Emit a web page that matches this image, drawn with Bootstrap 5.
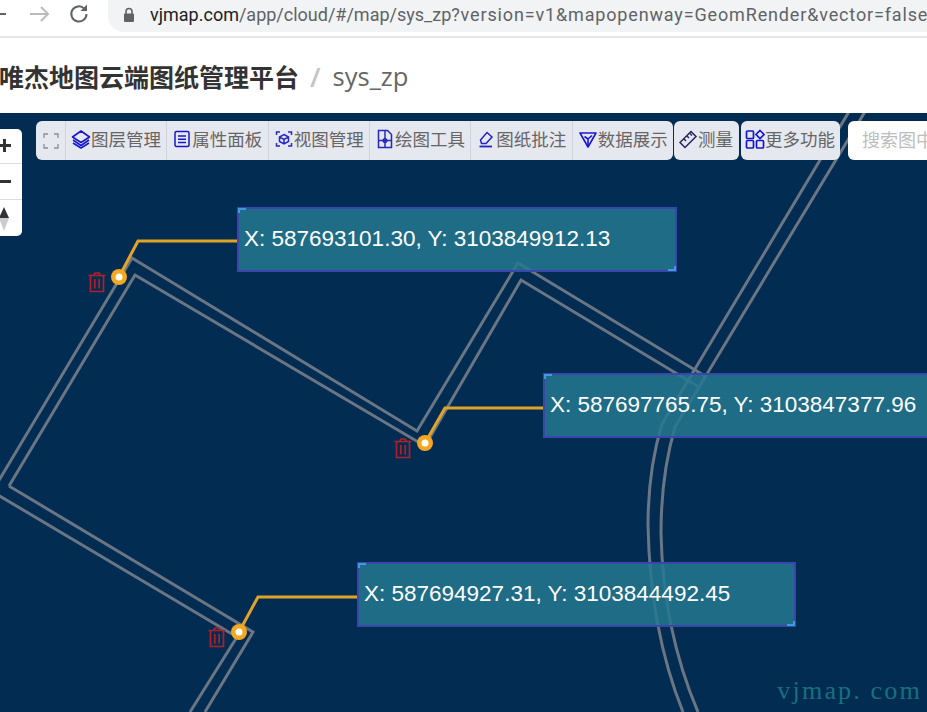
<!DOCTYPE html>
<html lang="zh-CN">
<head>
<meta charset="utf-8">
<title>唯杰地图云端图纸管理平台</title>
<link rel="stylesheet" href="https://cdn.jsdelivr.net/npm/bootstrap@5.3.0/dist/css/bootstrap.min.css">
<style>
html,body{height:712px;overflow:hidden;background:#fff}
body{font-family:"Noto Sans CJK SC","Noto Sans",sans-serif;width:927px}
.chrome-bar{height:38px;border-bottom:2px solid #e4e5e7;background:#fff}
.nav-glyph{flex:none}
.omni{height:32px;margin-left:18px;flex:1 1 0;min-width:0;background:#f1f3f4;border-radius:0 0 0 16px;padding-left:15px;padding-bottom:3px;overflow:hidden;white-space:nowrap;font-family:"Roboto","Noto Sans",sans-serif;font-size:18px;line-height:28px;color:#5f6368}
.omni b{font-weight:400;color:#202124}
.omni i{font-style:normal;letter-spacing:.85px}
.omni svg{flex:none;margin-right:15px}
.site-head{height:75px;background:#fff;white-space:nowrap;margin-left:-1px;padding-top:2px;font-size:25px;line-height:1}
.site-name{font-weight:700;color:#333}
.site-sep{color:#c4c4c4;font-weight:600;font-size:27px;margin:0 12px 0 11px;font-family:"Open Sans",sans-serif}
.site-map{color:#666;font-size:25.5px;font-family:"Open Sans",sans-serif}
.map-view{height:599px;background:#032c52;overflow:hidden}
.map-art{position:absolute;left:0;top:0}
.map-tools{position:absolute;left:36px;top:8px;height:39px;white-space:nowrap}
.tool-group{background:#e6e8ef;border-radius:6px;height:39px}
.tool-item{display:flex;align-items:center;width:101.340px;height:39px;padding:0 0 3px 5px;border:0;border-left:1px solid #d0d3dd;background:transparent;border-radius:0;color:#666;font-size:17.500px;line-height:1}
.tool-item:first-child{border-left:0;width:29px;padding:0 0 0 7px;border-radius:6px 0 0 6px}
.tool-item+.tool-item{flex:none}
.tool-item svg{flex:none}
.tool-solo{border-left:0;padding-left:4px;background:#e6e8ef;border-radius:6px}
.tool-solo.measure{width:65px;margin-left:1px}
.tool-solo.more{width:99px;margin-left:2px}
.map-search{width:120px;height:39px;margin-left:8px;background:#fff;border-radius:6px;color:#bdbdbd;font-size:18px;line-height:37px;padding-left:14px}
.zoom-box{position:absolute;left:0;top:16px;width:22px;height:107px;background:#fff;border-radius:0 5px 5px 0}
.zoom-cell{height:36px;border-bottom:1px solid #ddd}
.zoom-cell:first-child{height:35px}
.zoom-cell:last-child{border-bottom:0}
.tag{position:absolute;height:65px;background:rgba(36,120,144,.85);border:2px solid #3c45ab;color:#fff;font-family:"Liberation Sans",Arial,sans-serif;font-size:22.500px;line-height:60px;padding-left:5px;white-space:nowrap}
.tag::before,.tag::after{content:"";position:absolute;width:8px;height:5px}
.tag::before{left:-1px;top:-1px;border-left:2px solid #3e9be0;border-top:2px solid #3e9be0}
.tag::after{right:-1px;bottom:-1px;border-right:2px solid #3e9be0;border-bottom:2px solid #3e9be0}
.tag-a{left:237px;top:94px;width:440px}
.tag-b{left:543px;top:260px;width:440px}
.tag-c{left:357px;top:449px;width:439px}
.water{position:absolute;right:5px;bottom:8px;font-family:"Liberation Serif",serif;font-size:26.200px;line-height:1;letter-spacing:2.100px;color:#17707f}
</style>
</head>
<body>
<div class="chrome-bar d-flex align-items-start">
  <svg class="nav-glyph" width="20" height="28" viewBox="0 0 20 28"><path d="M-6 14H6" stroke="#5f6368" stroke-width="2" fill="none"/></svg>
  <svg class="nav-glyph ms-2" width="24" height="28" viewBox="0 0 24 28"><path d="M2 14H20M13 7l7 7-7 7" stroke="#b9bbbe" stroke-width="2" fill="none"/></svg>
  <svg class="nav-glyph ms-3" width="22" height="28" viewBox="0 0 22 28"><path d="M18.500 14a7.600 7.600 0 1 1-2.200-5.400" stroke="#5f6368" stroke-width="2" fill="none"/><path d="M19 4.500V11h-6.500z" fill="#5f6368"/></svg>
  <div class="omni d-flex align-items-center">
    <svg width="12" height="16" viewBox="0 0 12 16"><path d="M3 7V4.500a3 3 0 0 1 6 0V7" stroke="#5f6368" stroke-width="1.600" fill="none"/><rect x="1" y="6.500" width="10" height="8.500" rx="1" fill="#5f6368"/></svg>
    <span><b>vjmap.com</b>/app/cloud/#/map/sys_zp<i>?version=v1&amp;mapopenway=GeomRender&amp;vector=false</i></span>
  </div>
</div>
<div class="site-head d-flex align-items-center">
  <span class="site-name">唯杰地图云端图纸管理平台</span><span class="site-sep">/</span><span class="site-map">sys_zp</span>
</div>
<div class="map-view position-relative">
  <svg class="map-art" width="927" height="599" viewBox="0 113 927 599">
    <defs>
      <g id="bin" fill="none" stroke="#b0202a" stroke-width="1.700">
        <path d="M-8.500-6.500H8.500M-3.500-6.500L-2-9H2L3.500-6.500"/>
        <path d="M-6.500-6V9.500H6.500V-6"/>
        <path d="M-2.200-3V6.500M2.200-3V6.500"/>
      </g>
      <g id="pin">
        <circle r="8" fill="#f4a820"/><circle r="3.500" fill="#fff"/>
      </g>
    </defs>
    <g fill="none" stroke="#6a7684" stroke-width="3">
      <path d="M-2 482L132 258L417 431L518 263L705 376"/>
      <path d="M9 486L135 275L425 446L521 280L699 387"/>
      <path d="M-2 495L232 634M9 486L253 632L205 712M237 637L190 712"/>
      <path d="M850 110L662 424Q648 470 648 525Q650 630 683 712"/>
      <path d="M866 110L675 427Q661 475 661 533Q663 630 698 712"/>
    </g>
    <g fill="none" stroke="#e0a526" stroke-width="3">
      <path d="M119 277L138 241H238"/>
      <path d="M425 443L445 408H544"/>
      <path d="M239 632L258 597H358"/>
    </g>
    <use href="#bin" x="97" y="282"/><use href="#bin" x="403" y="448"/><use href="#bin" x="217" y="637"/>
    <use href="#pin" x="119" y="277"/><use href="#pin" x="425" y="443"/><use href="#pin" x="239" y="632"/>
  </svg>

  <div class="tag tag-a">X: 587693101.30, Y: 3103849912.13</div>
  <div class="tag tag-b">X: 587697765.75, Y: 3103847377.96</div>
  <div class="tag tag-c">X: 587694927.31, Y: 3103844492.45</div>
  <div class="water">vjmap. com</div>

  <div class="zoom-box">
    <div class="zoom-cell"><svg class="d-block" width="22" height="34" viewBox="0 0 22 34"><path d="M-2 16.500H11M4.500 10V23" stroke="#333" stroke-width="3" fill="none"/></svg></div>
    <div class="zoom-cell"><svg class="d-block" width="22" height="35" viewBox="0 0 22 35"><path d="M-2 17.500H11" stroke="#333" stroke-width="3" fill="none"/></svg></div>
    <div class="zoom-cell"><svg class="d-block" width="22" height="36" viewBox="0 0 22 36"><path d="M4 7L9 18H-1z" fill="#333"/><path d="M4 31L9 18H-1z" fill="#c9ccd0"/></svg></div>
  </div>

  <div class="map-tools d-flex">
    <div class="tool-group d-flex">
      <button class="btn tool-item" type="button" aria-label="全屏"><svg width="16" height="16" viewBox="0 0 16 16" fill="none" stroke="#8b8e94" stroke-width="1.300"><path d="M1 5V1H5M11 1H15V5M15 11V15H11M5 15H1V11"/></svg></button>
      <button class="btn tool-item" type="button"><svg width="20" height="20" viewBox="0 0 20 20" fill="none" stroke="#1717d0" stroke-width="1.600" stroke-linejoin="round"><path d="M10 2L18.500 8 10 13.500 1.500 8z"/><path d="M2 11L10 16.500 18 11"/><path d="M2 14L10 19 18 14"/></svg>图层管理</button>
      <button class="btn tool-item" type="button"><svg width="20" height="20" viewBox="0 0 20 20" fill="none" stroke="#1717c8" stroke-width="1.500"><rect x="3" y="2.500" width="14" height="15" rx="1.500"/><path d="M6 7H14M6 10.300H14M6 13.600H14"/></svg>属性面板</button>
      <button class="btn tool-item" type="button"><svg width="20" height="20" viewBox="0 0 20 20" fill="none" stroke="#2a2ac0" stroke-width="1.500"><path d="M2.500 6V3H6M14 3H17.500V6M17.500 14V17H14M6 17H2.500V14"/><path d="M10 5.500L14.500 8V12.500L10 15 5.500 12.500V8zM5.500 8L10 10.500 14.500 8M10 10.500V15"/></svg>视图管理</button>
      <button class="btn tool-item" type="button"><svg width="20" height="20" viewBox="0 0 20 20" fill="none" stroke="#2727c0" stroke-width="1.500"><path d="M3.500 1.500H12.500L16.500 5.500V18.500H3.500z"/><path d="M10 1.500V18.500M3.500 11.500H16.500"/><circle cx="10" cy="11.500" r="1.800"/></svg>绘图工具</button>
      <button class="btn tool-item" type="button"><svg width="20" height="20" viewBox="0 0 20 20" fill="none" stroke="#2323c4" stroke-width="1.500"><path d="M4.500 11L11 3.500 16 8 10 14.500H5.500z"/><path d="M3.500 17.500H16" stroke-width="1.800"/></svg>图纸批注</button>
      <button class="btn tool-item" type="button"><svg width="20" height="20" viewBox="0 0 20 20" fill="none" stroke="#1717d0" stroke-width="1.600" stroke-linejoin="round"><path d="M2 4H18L10 18z"/><path d="M6.500 7.500L10 10 14 6.500M10 10V17"/></svg>数据展示</button>
    </div>
    <button class="btn tool-item tool-solo measure" type="button"><svg width="20" height="20" viewBox="0 0 20 20" fill="none" stroke="#25255f" stroke-width="1.500"><path d="M2 13.500L13 2.500 18 7.500 7 18.500z"/><path d="M6 10L8 12M9 7L11 9M12 4.500L14 6.500"/></svg>测量</button>
    <button class="btn tool-item tool-solo more" type="button"><svg width="20" height="20" viewBox="0 0 20 20" fill="none" stroke="#1515d0" stroke-width="1.700"><rect x="1.500" y="2" width="7" height="7.500" rx="1"/><rect x="1.500" y="11.500" width="7" height="7.500" rx="1"/><rect x="11.500" y="11.500" width="7" height="7.500" rx="1"/><path d="M15 1.500L19 5.500 15 9.500 11 5.500z"/></svg>更多功能</button>
    <div class="map-search">搜索图中</div>
  </div>
</div>
<script src="https://cdn.jsdelivr.net/npm/bootstrap@5.3.0/dist/js/bootstrap.bundle.min.js"></script>
</body>
</html>
